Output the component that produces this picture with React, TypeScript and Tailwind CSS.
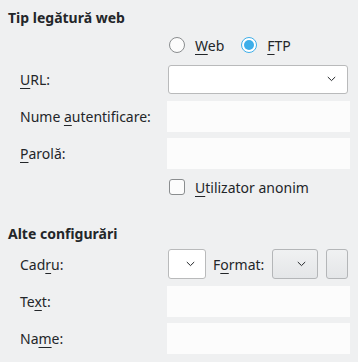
import React from "react";

const Chevron = () => (
  <svg width="9" height="6" viewBox="0 0 9 6" className="block">
    <path d="M0.8 1 L4.5 4.6 L8.2 1" fill="none" stroke="#232629" strokeWidth="1" />
  </svg>
);

const U = ({ children }: { children: React.ReactNode }) => (
  <span className="underline decoration-[1px] underline-offset-[3px]">{children}</span>
);

const Field = () => <div className="w-[183px] h-full bg-[#fcfcfc]" />;

export default function App() {
  return (
    <div
      className="w-[358px] h-[362px] bg-[#eff0f1] text-[#232629] text-[14px] flex flex-col overflow-hidden"
      style={{ fontFamily: '"Noto Sans", "Open Sans", sans-serif' }}
    >
      {/* Heading 1 */}
      <div className="h-[35px] flex items-center pl-[8px] font-bold">Tip legătură web</div>

      {/* Radios */}
      <div className="h-[20px] flex items-center pl-[169px]">
        <div className="w-[16px] h-[16px] rounded-full border border-[#8a8d8f] bg-[#fcfcfc]" />
        <span className="ml-[10px]"><U>W</U>eb</span>
        <div className="ml-[17px] w-[16px] h-[16px] rounded-full border-[1.5px] border-[#3daee9] bg-white flex items-center justify-center">
          <div className="w-[10px] h-[10px] rounded-full bg-[#3daee9]" />
        </div>
        <span className="ml-[10px]"><U>F</U>TP</span>
      </div>

      {/* URL */}
      <div className="mt-[9px] h-[30px] flex items-center">
        <div className="w-[167px] pl-[20px]"><U>U</U>RL:</div>
        <div className="ml-[1px] w-[180px] h-[29px] bg-white border border-[#b9babb] rounded-[3px] flex items-center justify-end pr-[11px]">
          <Chevron />
        </div>
      </div>

      {/* Nume */}
      <div className="mt-[7px] h-[31px] flex items-center">
        <div className="w-[167px] pl-[20px]">Nume <U>a</U>utentificare:</div>
        <Field />
      </div>

      {/* Parola */}
      <div className="mt-[6px] h-[31px] flex items-center">
        <div className="w-[167px] pl-[20px]"><U>P</U>arolă:</div>
        <Field />
      </div>

      {/* Checkbox */}
      <div className="mt-[8px] h-[20px] flex items-center pl-[169px]">
        <div className="w-[16px] h-[16px] rounded-[3px] border border-[#8a8d8f] bg-[#fcfcfc]" />
        <span className="ml-[10px]"><U>U</U>tilizator anonim</span>
      </div>

      {/* Heading 2 */}
      <div className="mt-[23px] h-[26px] flex items-center pl-[8px] font-bold">Alte configurări</div>

      {/* Cadru */}
      <div className="mt-[3px] h-[30px] flex items-center">
        <div className="w-[167px] pl-[20px]">Cad<U>r</U>u:</div>
        <div className="ml-[1px] w-[38px] h-[30px] bg-white border border-[#b9babb] rounded-[3px] flex items-center justify-end pr-[10px]">
          <Chevron />
        </div>
        <span className="ml-[7px]">F<U>o</U>rmat:</span>
        <div className="ml-[8px] w-[46px] h-[30px] bg-gradient-to-b from-[#f0f1f2] to-[#e4e6e8] border border-[#b4b6b8] rounded-[3px] flex items-center justify-end pr-[11px]">
          <Chevron />
        </div>
        <div className="ml-[8px] w-[22px] h-[30px] bg-gradient-to-b from-[#f0f1f2] to-[#e4e6e8] border border-[#b4b6b8] rounded-[3px]" />
      </div>

      {/* Text */}
      <div className="mt-[7px] h-[31px] flex items-center">
        <div className="w-[167px] pl-[20px]">Te<U>x</U>t:</div>
        <Field />
      </div>

      {/* Name */}
      <div className="mt-[6px] h-[31px] flex items-center">
        <div className="w-[167px] pl-[20px]">Na<U>m</U>e:</div>
        <Field />
      </div>
    </div>
  );
}
